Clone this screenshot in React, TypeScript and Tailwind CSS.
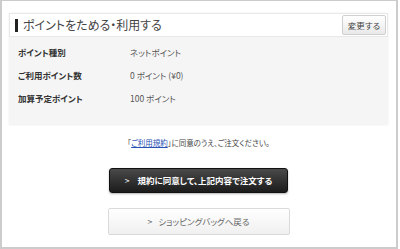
import React from "react";

const font = "[font-family:'Noto_Sans_CJK_JP','Noto_Sans',sans-serif] [font-feature-settings:'palt']";

export default function App() {
  return (
    <div className={`w-[400px] h-[249px] bg-white ${font}`}>
      <div className="w-[398px] h-[249px] border-t border-l-2 border-r-2 border-b-2 border-[#cccccc] pt-[12px] pl-[7px] pr-[8px]">
        <div className="shadow-[0_0_2px_rgba(0,0,0,0.08)]">
          <div className="h-[24px] bg-white border border-[#e8e8e8] flex items-center justify-between pl-[5px] pr-[1px]">
            <div className="flex items-center">
              <div className="w-[3px] h-[13px] bg-[#222]" />
              <span className="ml-[5px] text-[12px] leading-none text-[#444]">ポイントをためる・利用する</span>
            </div>
            <button className="h-[20px] w-[44px] border border-[#cfcfcf] rounded-[2px] bg-gradient-to-b from-white to-[#e9e9e9] text-[8.5px] text-[#444] flex items-center justify-center">
              変更する
            </button>
          </div>
          <div className="h-[88px] bg-[#f5f5f5] pl-[9px] pt-[4px] text-[8.5px] text-[#333]">
            <div className="flex h-[23px] items-center">
              <span className="w-[112px] font-bold">ポイント種別</span>
              <span className="text-[#555]">ネットポイント</span>
            </div>
            <div className="flex h-[23px] items-center">
              <span className="w-[112px] font-bold">ご利用ポイント数</span>
              <span className="text-[#555]">0 ポイント (¥0)</span>
            </div>
            <div className="flex h-[23px] items-center">
              <span className="w-[112px] font-bold">加算予定ポイント</span>
              <span className="text-[#555]">100 ポイント</span>
            </div>
          </div>
        </div>
        <div className="mt-[14px] text-center text-[7.5px] text-[#444] leading-none">
          「<span className="text-[#2850b4] underline">ご利用規約</span>」に同意のうえ、ご注文ください。
        </div>
        <div className="flex flex-col items-center mt-[21px]">
          <button className="w-[179px] h-[25px] rounded-[3px] bg-gradient-to-b from-[#4a4a4a] to-[#1c1c1c] border border-[#111] text-white text-[8.5px] font-bold flex items-center justify-center shadow-[0_1px_2px_rgba(0,0,0,0.3)]">
            <span className="mr-[8px] font-normal">&gt;</span>規約に同意して、上記内容で注文する
          </button>
          <button className="mt-[15px] w-[182px] h-[27px] rounded-[2px] bg-gradient-to-b from-white to-[#f0f0f0] border border-[#dadada] text-[#666] text-[8.5px] flex items-center justify-center">
            <span className="mr-[6px]">&gt;</span>ショッピングバッグへ戻る
          </button>
        </div>
      </div>
    </div>
  );
}
